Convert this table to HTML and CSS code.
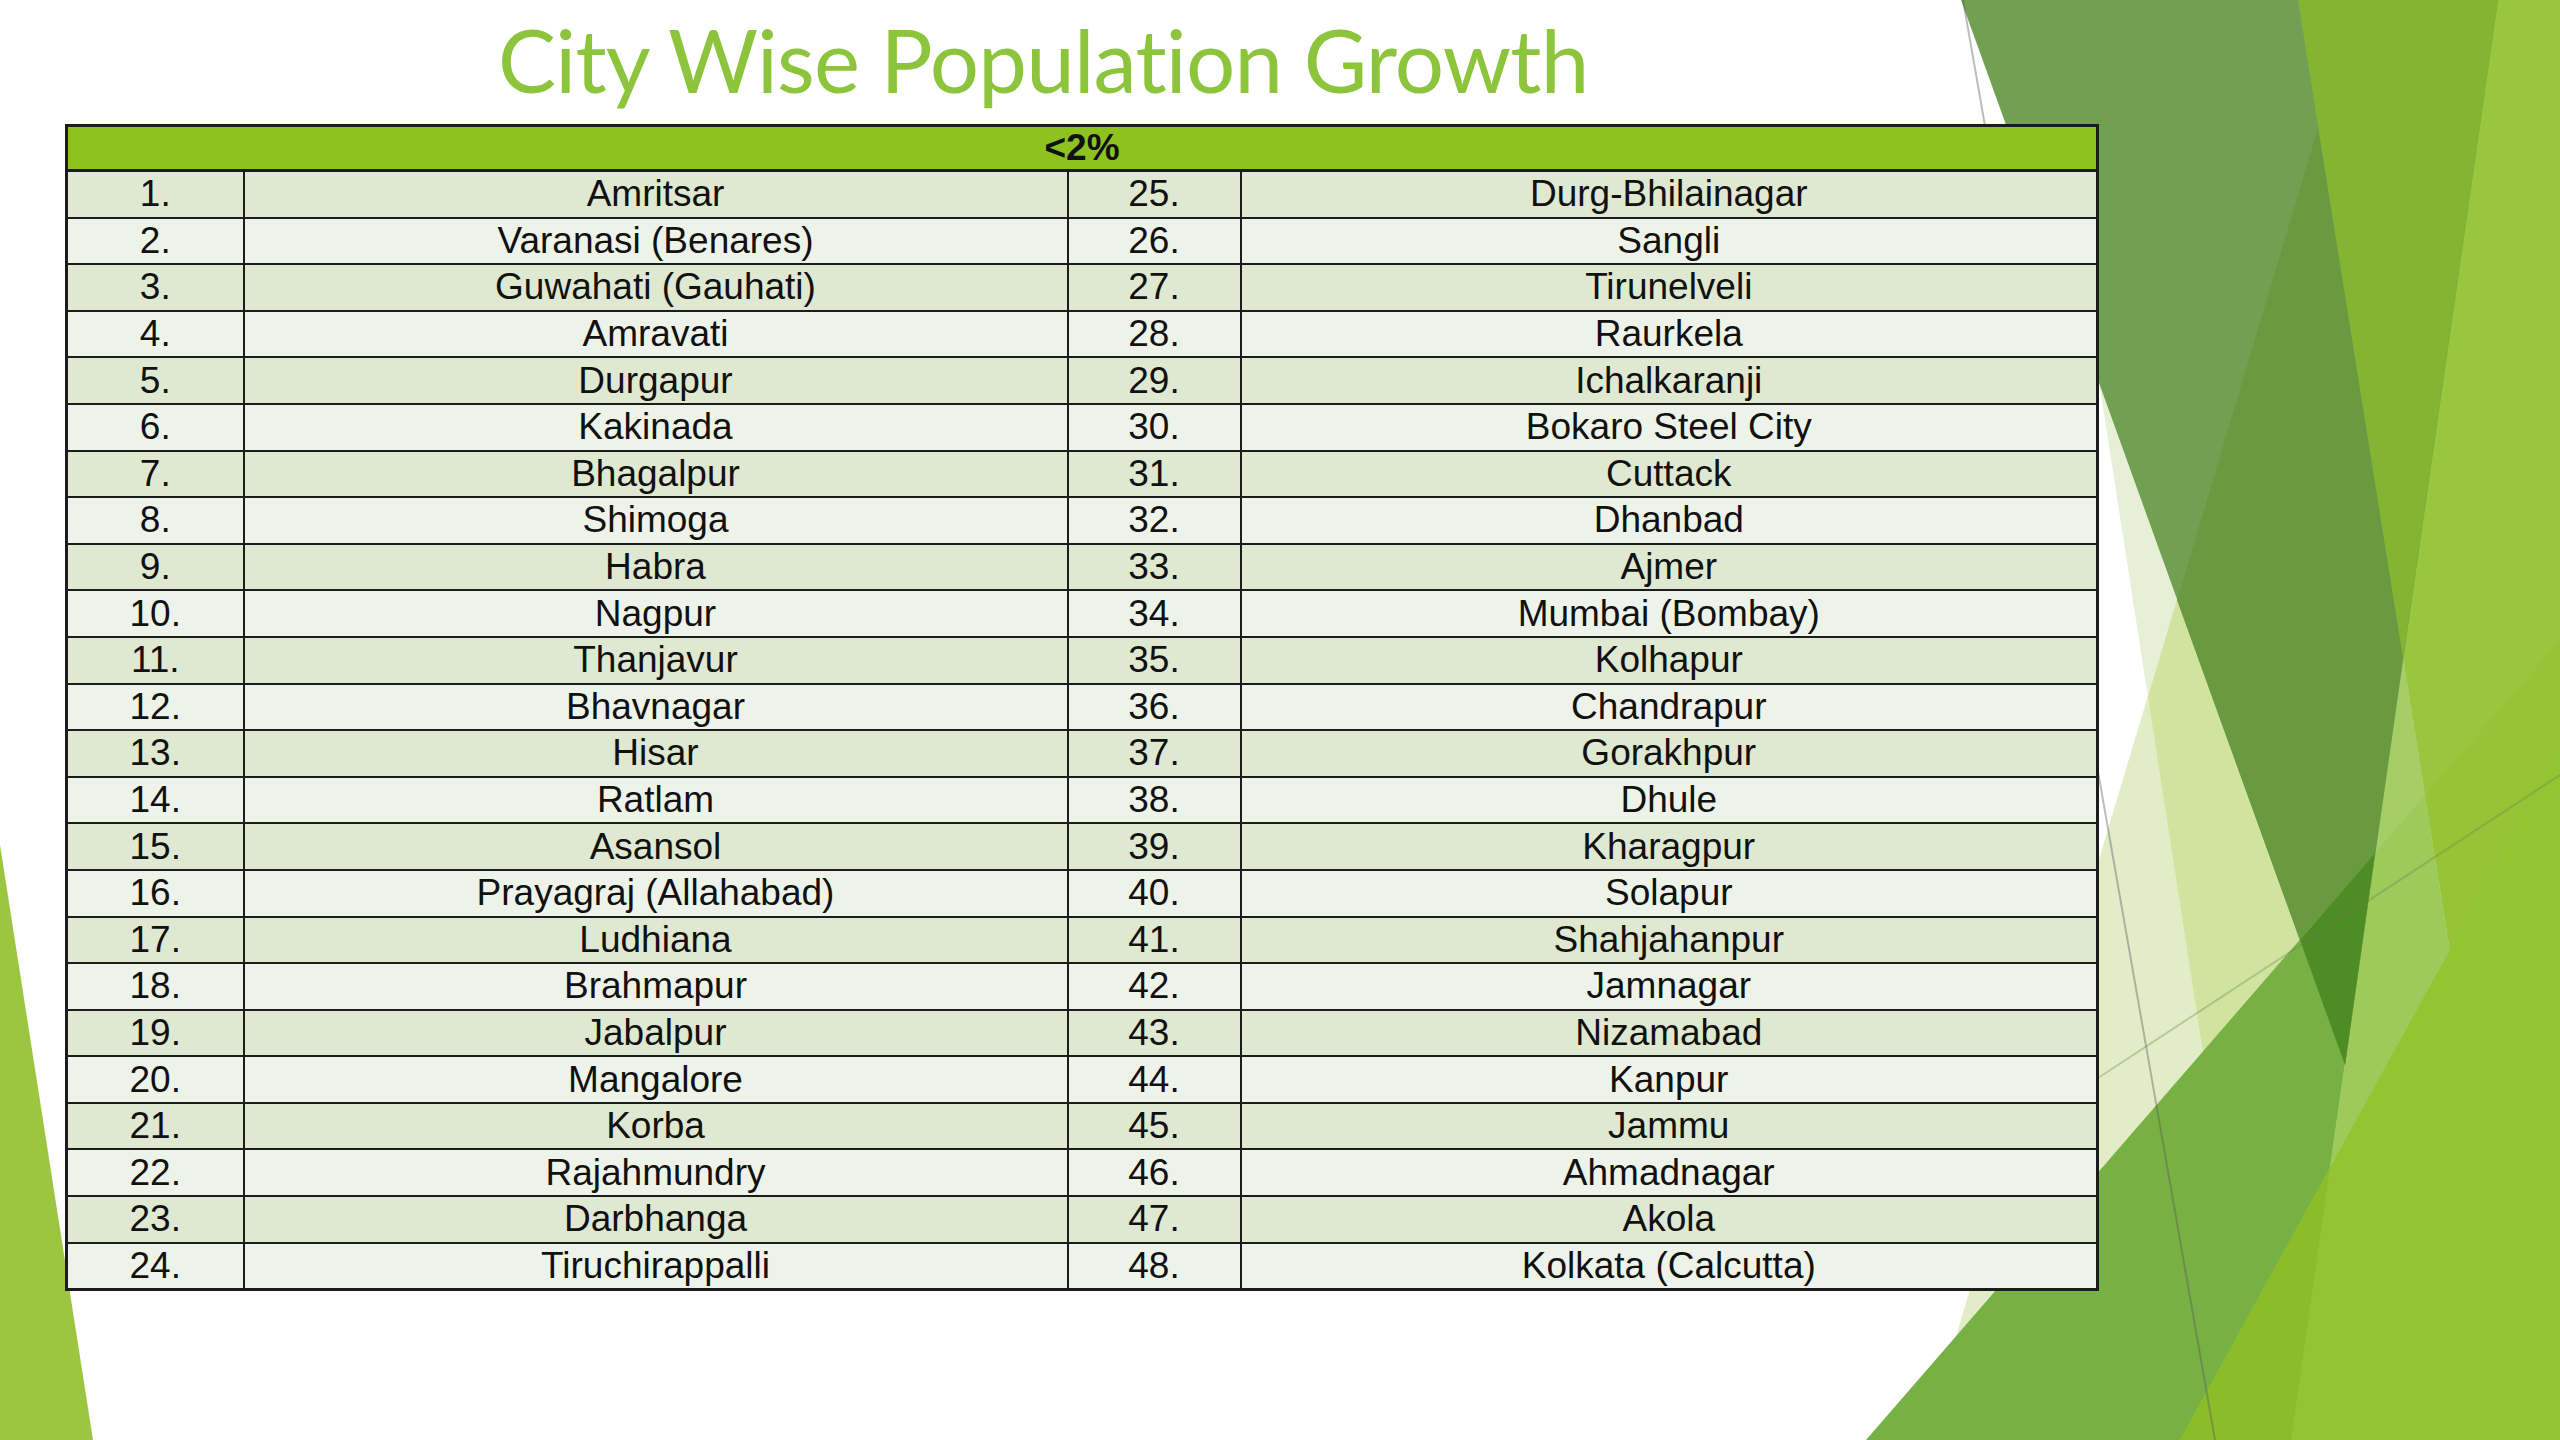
FILE: index.html
```html
<!DOCTYPE html>
<html lang="en">
<head>
<meta charset="utf-8">
<title>City Wise Population Growth</title>
<link rel="stylesheet" href="styles.css">
</head>
<body>
<div class="slide">
  <svg class="deco" viewBox="0 0 2560 1440" preserveAspectRatio="none" aria-hidden="true">
    <polygon points="0,845 93,1440 0,1440" fill="#9cc63f"/>
    <polygon points="2040,0 2263,1440 2560,1440 2560,0" fill="#e7f0d6"/>
    <polygon points="2318,128 1925,1440 2528,1440" fill="#e2edc8"/>
    <polygon points="2318,128 2148,697 2263,1440 2528,1440" fill="#d0e4a0"/>
    <polygon points="2403,658 2291,1440 2528,1440" fill="#9dca5a"/>
    <polygon points="2403,658 2375,853 2425,795" fill="#a5cf66"/>
    <polygon points="2298,0 2560,0 2560,1440 2528,1440" fill="#99c63f"/>
    <polygon points="2425,795 2560,640 2560,750 2450,950" fill="#95c437"/>
    <polygon points="1961,0 2498,0 2345,1065" fill="#72a052"/>
    <polygon points="2318,128 2403,658 2345,1065 2177,600" fill="#6a9a40"/>
    <polygon points="2298,0 2498,0 2403,658" fill="#84b432"/>
    <polygon points="1866,1440 2375,853 2291,1440" fill="#77b144"/>
    <polygon points="2300,940 2375,853 2345,1065" fill="#4e8c26"/>
    <polygon points="2180,1440 2560,750 2560,1440" fill="#93c432"/>
    <polygon points="2180,1440 2330,1168 2291,1440" fill="#8bbd2b"/>
    <line x1="1963" y1="0" x2="2215" y2="1440" stroke="rgba(90,90,90,0.4)" stroke-width="2"/>
    <line x1="2098" y1="1078" x2="2560" y2="775" stroke="rgba(110,130,80,0.35)" stroke-width="2"/>
  </svg>

  <div class="content">
    <h1 class="title">City Wise Population Growth</h1>
    <table class="pop">
      <colgroup>
        <col class="c-num"><col class="c-city"><col class="c-num2"><col class="c-city2">
      </colgroup>
      <thead>
        <tr><th colspan="4">&lt;2%</th></tr>
      </thead>
      <tbody>
        <tr><td>1.</td><td>Amritsar</td><td>25.</td><td>Durg-Bhilainagar</td></tr>
        <tr><td>2.</td><td>Varanasi (Benares)</td><td>26.</td><td>Sangli</td></tr>
        <tr><td>3.</td><td>Guwahati (Gauhati)</td><td>27.</td><td>Tirunelveli</td></tr>
        <tr><td>4.</td><td>Amravati</td><td>28.</td><td>Raurkela</td></tr>
        <tr><td>5.</td><td>Durgapur</td><td>29.</td><td>Ichalkaranji</td></tr>
        <tr><td>6.</td><td>Kakinada</td><td>30.</td><td>Bokaro Steel City</td></tr>
        <tr><td>7.</td><td>Bhagalpur</td><td>31.</td><td>Cuttack</td></tr>
        <tr><td>8.</td><td>Shimoga</td><td>32.</td><td>Dhanbad</td></tr>
        <tr><td>9.</td><td>Habra</td><td>33.</td><td>Ajmer</td></tr>
        <tr><td>10.</td><td>Nagpur</td><td>34.</td><td>Mumbai (Bombay)</td></tr>
        <tr><td>11.</td><td>Thanjavur</td><td>35.</td><td>Kolhapur</td></tr>
        <tr><td>12.</td><td>Bhavnagar</td><td>36.</td><td>Chandrapur</td></tr>
        <tr><td>13.</td><td>Hisar</td><td>37.</td><td>Gorakhpur</td></tr>
        <tr><td>14.</td><td>Ratlam</td><td>38.</td><td>Dhule</td></tr>
        <tr><td>15.</td><td>Asansol</td><td>39.</td><td>Kharagpur</td></tr>
        <tr><td>16.</td><td>Prayagraj (Allahabad)</td><td>40.</td><td>Solapur</td></tr>
        <tr><td>17.</td><td>Ludhiana</td><td>41.</td><td>Shahjahanpur</td></tr>
        <tr><td>18.</td><td>Brahmapur</td><td>42.</td><td>Jamnagar</td></tr>
        <tr><td>19.</td><td>Jabalpur</td><td>43.</td><td>Nizamabad</td></tr>
        <tr><td>20.</td><td>Mangalore</td><td>44.</td><td>Kanpur</td></tr>
        <tr><td>21.</td><td>Korba</td><td>45.</td><td>Jammu</td></tr>
        <tr><td>22.</td><td>Rajahmundry</td><td>46.</td><td>Ahmadnagar</td></tr>
        <tr><td>23.</td><td>Darbhanga</td><td>47.</td><td>Akola</td></tr>
        <tr><td>24.</td><td>Tiruchirappalli</td><td>48.</td><td>Kolkata (Calcutta)</td></tr>
      </tbody>
    </table>
  </div>
</div>
</body>
</html>
```

FILE: styles.css
```css
html, body {
  margin: 0;
  padding: 0;
  background: #ffffff;
}

.slide {
  position: relative;
  width: 2560px;
  height: 1440px;
  overflow: hidden;
  background: #ffffff;
}

.deco {
  position: absolute;
  left: 0;
  top: 0;
  width: 2560px;
  height: 1440px;
  z-index: 0;
}

.content {
  position: relative;
  z-index: 1;
  padding-top: 5px;
  padding-left: 65px;
}

.title {
  margin: 0 0 0 433px;
  height: 119px;
  font-family: "Lato", "Open Sans", sans-serif;
  font-weight: 400;
  font-size: 87px;
  line-height: 110px;
  letter-spacing: -0.8px;
  font-variant-ligatures: none;
  font-feature-settings: "liga" 0, "clig" 0;
  color: #8cc43c;
  white-space: nowrap;
}

.pop {
  width: 2031px;
  table-layout: fixed;
  border-collapse: collapse;
  border: 3px solid #1c1c1c;
  font-family: "Liberation Sans", Arial, sans-serif;
  font-size: 37px;
  color: #111111;
}

.c-num { width: 177px; }
.c-city { width: 824px; }
.c-num2 { width: 173px; }
.c-city2 { width: 857px; }

.pop th {
  height: 42px;
  padding: 0;
  background: #8dc21f;
  font-weight: 700;
  font-size: 37px;
  line-height: 42px;
  text-align: center;
  border-bottom: 3px solid #1c1c1c;
}

.pop td {
  height: 44.6px;
  padding: 0;
  text-align: center;
  line-height: 44px;
  border: 2px solid #1c1c1c;
  white-space: nowrap;
}

.pop tbody tr:nth-child(odd) td {
  background: #dfe8d0;
}

.pop tbody tr:nth-child(even) td {
  background: #eef3e9;
}
```
